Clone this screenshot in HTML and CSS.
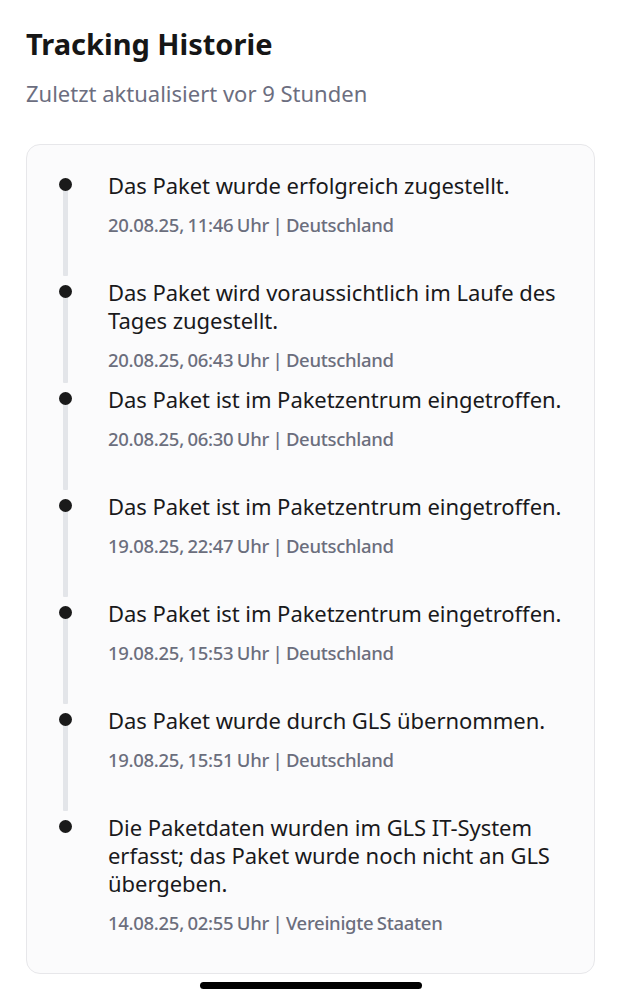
FILE: index.html
```html
<!DOCTYPE html>
<html lang="de">
<head>
<meta charset="utf-8">
<title>Tracking Historie</title>
<link rel="stylesheet" href="styles.css">
</head>
<body>
<div class="page">
  <h1 class="title">Tracking Historie</h1>
  <p class="subtitle">Zuletzt aktualisiert vor 9 Stunden</p>
  <div class="card">
    <div class="item">
      <div class="marker"><span class="dot"></span><span class="line"></span></div>
      <div class="content">
        <div class="event">Das Paket wurde erfolgreich zugestellt.</div>
        <div class="meta">20.08.25, 11:46 Uhr | Deutschland</div>
      </div>
    </div>
    <div class="item">
      <div class="marker"><span class="dot"></span><span class="line"></span></div>
      <div class="content">
        <div class="event">Das Paket wird voraussichtlich im Laufe des Tages zugestellt.</div>
        <div class="meta">20.08.25, 06:43 Uhr | Deutschland</div>
      </div>
    </div>
    <div class="item">
      <div class="marker"><span class="dot"></span><span class="line"></span></div>
      <div class="content">
        <div class="event">Das Paket ist im Paketzentrum eingetroffen.</div>
        <div class="meta">20.08.25, 06:30 Uhr | Deutschland</div>
      </div>
    </div>
    <div class="item">
      <div class="marker"><span class="dot"></span><span class="line"></span></div>
      <div class="content">
        <div class="event">Das Paket ist im Paketzentrum eingetroffen.</div>
        <div class="meta">19.08.25, 22:47 Uhr | Deutschland</div>
      </div>
    </div>
    <div class="item">
      <div class="marker"><span class="dot"></span><span class="line"></span></div>
      <div class="content">
        <div class="event">Das Paket ist im Paketzentrum eingetroffen.</div>
        <div class="meta">19.08.25, 15:53 Uhr | Deutschland</div>
      </div>
    </div>
    <div class="item">
      <div class="marker"><span class="dot"></span><span class="line"></span></div>
      <div class="content">
        <div class="event">Das Paket wurde durch GLS übernommen.</div>
        <div class="meta">19.08.25, 15:51 Uhr | Deutschland</div>
      </div>
    </div>
    <div class="item item-last">
      <div class="marker"><span class="dot"></span></div>
      <div class="content">
        <div class="event">Die Paketdaten wurden im GLS IT-System erfasst; das Paket wurde noch nicht an GLS übergeben.</div>
        <div class="meta">14.08.25, 02:55 Uhr | Vereinigte Staaten</div>
      </div>
    </div>
  </div>
  <div class="home-indicator"></div>
</div>
</body>
</html>
```

FILE: styles.css
```css
* { box-sizing: border-box; }
html, body { margin: 0; padding: 0; background: #ffffff; }
body {
  font-family: "Noto Sans", Lato, sans-serif;
  color: #1b1b1d;
}
.page {
  padding: 26px 26px 0 26px;
  display: flex;
  flex-direction: column;
}
.title {
  margin: 0;
  font-size: 29px;
  line-height: 36px;
  font-weight: 700;
  color: #161616;
}
.subtitle {
  margin: 18px 0 0 0;
  font-size: 22px;
  line-height: 26px;
  color: #6c6e7f;
}
.card {
  margin-top: 38px;
  border: 1.5px solid #e7e7ea;
  border-radius: 14px;
  background: #fbfbfc;
  padding: 26px 28px 25px 32px;
}
.item {
  display: flex;
  min-height: 107px;
}
.marker {
  width: 13px;
  flex: none;
  display: flex;
  flex-direction: column;
  align-items: center;
  padding-top: 7px;
}
.dot {
  width: 13px;
  height: 13px;
  border-radius: 50%;
  background: #1a1a1a;
  flex: none;
  position: relative;
  z-index: 1;
}
.line {
  width: 5px;
  flex: 1;
  background: #e3e5e9;
  margin-top: -2px;
  margin-bottom: 2px;
  border-radius: 1px;
}
.content {
  margin-left: 36px;
  padding-bottom: 13px;
}
.event {
  font-size: 22px;
  line-height: 28px;
  color: #19191b;
  letter-spacing: -0.05px;
}
.meta {
  margin-top: 14px;
  font-size: 18.5px;
  line-height: 24px;
  color: #6b6e7d;
  font-weight: 500;
  letter-spacing: -0.3px;
  word-spacing: -1px;
}
.home-indicator {
  align-self: center;
  width: 222px;
  height: 7px;
  border-radius: 4px;
  background: #000000;
  margin-top: 8px;
}
```
